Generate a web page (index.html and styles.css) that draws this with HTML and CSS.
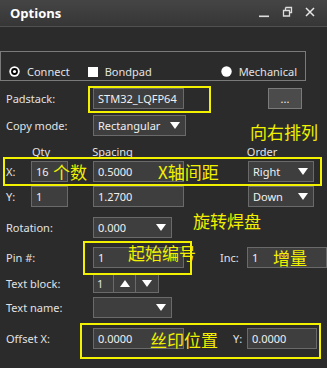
FILE: index.html
```html
<!DOCTYPE html>
<html>
<head>
<meta charset="utf-8">
<link rel="stylesheet" href="styles.css">
</head>
<body>
<div class="window">
  <div class="titlebar">
    <span class="title">Options</span>
    <div class="controls">
      <svg class="ctl" width="12" height="12" viewBox="0 0 12 12"><rect x="1" y="9.5" width="10" height="1.6" fill="#ddd"/></svg>
      <svg class="ctl" width="12" height="12" viewBox="0 0 12 12"><path d="M4.5 1.5h6v5h-2M2.5 4.5h6v5.5h-6z" fill="none" stroke="#ddd" stroke-width="1.3"/><path d="M4.5 1.5v3" stroke="#ddd" stroke-width="1.3"/></svg>
      <svg class="ctl" width="12" height="12" viewBox="0 0 12 12"><path d="M2 2l8 8M10 2l-8 8" stroke="#e6e6e6" stroke-width="1.5"/></svg>
    </div>
  </div>
  <div class="content">
    <div class="group">
      <div class="opt"><svg width="11" height="11" viewBox="0 0 11 11"><circle cx="5.5" cy="5.5" r="5.2" fill="#fff"/><circle cx="5.5" cy="5.5" r="3.4" fill="#000"/><circle cx="5.5" cy="5.5" r="1.6" fill="#fff"/></svg><span>Connect</span></div>
      <div class="opt opt-bond"><span class="square"></span><span>Bondpad</span></div>
      <div class="opt opt-mech"><svg width="11" height="11" viewBox="0 0 11 11"><circle cx="5.5" cy="5.5" r="5.2" fill="#fff"/></svg><span>Mechanical</span></div>
    </div>

    <div class="row r-pad">
      <span class="label">Padstack:</span>
      <div class="field w91">STM32_LQFP64</div>
      <div class="btn">...</div>
    </div>
    <div class="row r-copy">
      <span class="label">Copy mode:</span>
      <div class="field select w93"><span>Rectangular</span><i class="tri"></i></div>
    </div>
    <div class="row r-head">
      <span class="h-qty">Qty</span>
      <span class="h-spacing">Spacing</span>
      <span class="h-order">Order</span>
    </div>
    <div class="row r-x">
      <span class="axis">X:</span>
      <div class="field w37">16</div>
      <div class="field w91 spc">0.5000</div>
      <div class="field select w66 ord"><span>Right</span><i class="tri"></i></div>
    </div>
    <div class="row r-y">
      <span class="axis">Y:</span>
      <div class="field w37">1</div>
      <div class="field w91 spc">1.2700</div>
      <div class="field select w66 ord"><span>Down</span><i class="tri"></i></div>
    </div>
    <div class="row r-rot">
      <span class="label">Rotation:</span>
      <div class="field select w79"><span>0.000</span><i class="tri"></i></div>
    </div>
    <div class="row r-pin">
      <span class="label">Pin #:</span>
      <div class="field w91">1</div>
      <span class="inc">Inc:</span>
      <div class="field w80">1</div>
    </div>
    <div class="row r-tb">
      <span class="label">Text block:</span>
      <div class="spin">
        <div class="spin-val">1</div>
        <div class="spin-btn"><i class="tri-up"></i></div>
        <div class="spin-btn"><i class="tri"></i></div>
      </div>
    </div>
    <div class="row r-tn">
      <span class="label">Text name:</span>
      <div class="field select w79"><span></span><i class="tri"></i></div>
    </div>
    <div class="row r-off">
      <span class="label">Offset X:</span>
      <div class="field w91">0.0000</div>
      <span class="offy">Y:</span>
      <div class="field w70">0.0000</div>
    </div>

    <div class="hl hl-pad"></div>
    <div class="hl hl-x"></div>
    <div class="hl hl-pin"></div>
    <div class="hl hl-off"></div>
    <span class="note n-order">向右排列</span>
    <span class="note n-qty">个数</span>
    <span class="note n-spc">X轴间距</span>
    <span class="note n-rot">旋转焊盘</span>
    <span class="note n-pin">起始编号</span>
    <span class="note n-inc">增量</span>
    <span class="note n-off">丝印位置</span>
  </div>
</div>
</body>
</html>
```

FILE: styles.css
```css
* { box-sizing: border-box; }
html, body { margin: 0; padding: 0; }
body {
  width: 327px;
  height: 368px;
  overflow: hidden;
  background: #2b2b2b;
  font-family: "Noto Sans", "Open Sans", sans-serif;
  font-size: 11px;
  color: #e2e2e2;
}
.window { width: 327px; height: 368px; }
.titlebar {
  height: 27px;
  background: linear-gradient(#454545, #363636);
  border-bottom: 1px solid #505050;
  display: flex;
  align-items: center;
  justify-content: space-between;
  padding: 0 11px 0 10px;
}
.title {
  font-family: "Open Sans", sans-serif;
  font-weight: 700;
  font-size: 13px;
  color: #fff;
  margin-top: -1px;
}
.controls { display: flex; gap: 11px; align-items: center; margin-top: -2px; }
.ctl { display: block; }

.content { position: relative; padding-top: 24px; height: 341px; }

.group {
  width: 306px;
  height: 30px;
  border: 1px solid #7a7a7a;
  display: flex;
  align-items: center;
  padding: 11px 0 0 8px;
}
.opt { display: flex; align-items: center; gap: 7px; line-height: 1; }
.opt svg { display: block; }
.opt-bond { margin-left: 18px; }
.opt-mech { margin-left: auto; margin-right: 8px; }
.square { width: 10px; height: 10px; background: #fff; display: block; }

.row { display: flex; align-items: center; height: 21px; padding-left: 6px; }
.label { width: 87px; flex: none; }
.field {
  height: 21px;
  background: #3e3e3e;
  border: 1px solid #6a6a6a;
  display: flex;
  align-items: center;
  padding: 0 5px 0 4px;
  color: #f0f0f0;
  white-space: nowrap;
  flex: none;
}
.select { justify-content: space-between; padding-right: 5px; }
.tri {
  display: block;
  width: 0; height: 0;
  border-left: 5px solid transparent;
  border-right: 5px solid transparent;
  border-top: 7px solid #fff;
}
.tri-up {
  display: block;
  width: 0; height: 0;
  border-left: 5px solid transparent;
  border-right: 5px solid transparent;
  border-bottom: 7px solid #fff;
}
.w91 { width: 91px; }
.w93 { width: 93px; }
.w37 { width: 37px; }
.w66 { width: 66px; }
.w79 { width: 79px; }
.w80 { width: 80px; }
.w70 { width: 70px; }

.btn {
  width: 34px; height: 21px;
  margin-left: 84px;
  background: #4b4b4b;
  border: 1px solid #7a7a7a;
  display: flex; align-items: center; justify-content: center;
  color: #eee;
}

.r-pad { margin-top: 7px; }
.r-copy { margin-top: 6px; }
.r-head { margin-top: 7px; height: 17px; padding-left: 32px; }
.h-spacing { margin-left: 42px; }
.h-order { margin-left: 114px; }
.r-x { margin-top: 1px; }
.r-y { margin-top: 4px; }
.axis { width: 25px; flex: none; }
.spc { margin-left: 25px; }
.ord { margin-left: 64px; }
.r-rot { margin-top: 10px; }
.r-pin { margin-top: 9px; }
.inc { margin-left: 36px; width: 27px; }
.r-tb { margin-top: 5px; height: 20px; }
.spin { display: flex; height: 20px; border: 1px solid #6a6a6a; background: #3e3e3e; }
.spin-val { width: 20px; padding-left: 3px; display: flex; align-items: center; border-right: 1px solid #6a6a6a; }
.spin-btn { width: 22px; display: flex; align-items: center; justify-content: center; border-right: 1px solid #6a6a6a; }
.spin-btn:last-child { border-right: none; }
.r-tn { margin-top: 4px; }
.r-off { margin-top: 10px; }
.offy { margin-left: 49px; width: 14px; }

.hl { position: absolute; border: 2px solid #f2f200; }
.hl-pad { left: 88px; top: 59px; width: 123px; height: 27px; }
.hl-x { left: 3px; top: 130px; width: 319px; height: 29px; }
.hl-pin { left: 83px; top: 214px; width: 109px; height: 34px; }
.hl-off { left: 80px; top: 296px; width: 241px; height: 36px; }

.note {
  position: absolute;
  font-family: "Noto Sans CJK SC", sans-serif;
  font-size: 17px;
  line-height: 1;
  color: #f0f000;
  white-space: nowrap;
}
.n-order { left: 250px; top: 96px; }
.n-qty { left: 53px; top: 136px; }
.n-spc { left: 158px; top: 136px; }
.n-rot { left: 193px; top: 185px; }
.n-pin { left: 128px; top: 217px; }
.n-inc { left: 273px; top: 222px; }
.n-off { left: 150px; top: 304px; }
```
